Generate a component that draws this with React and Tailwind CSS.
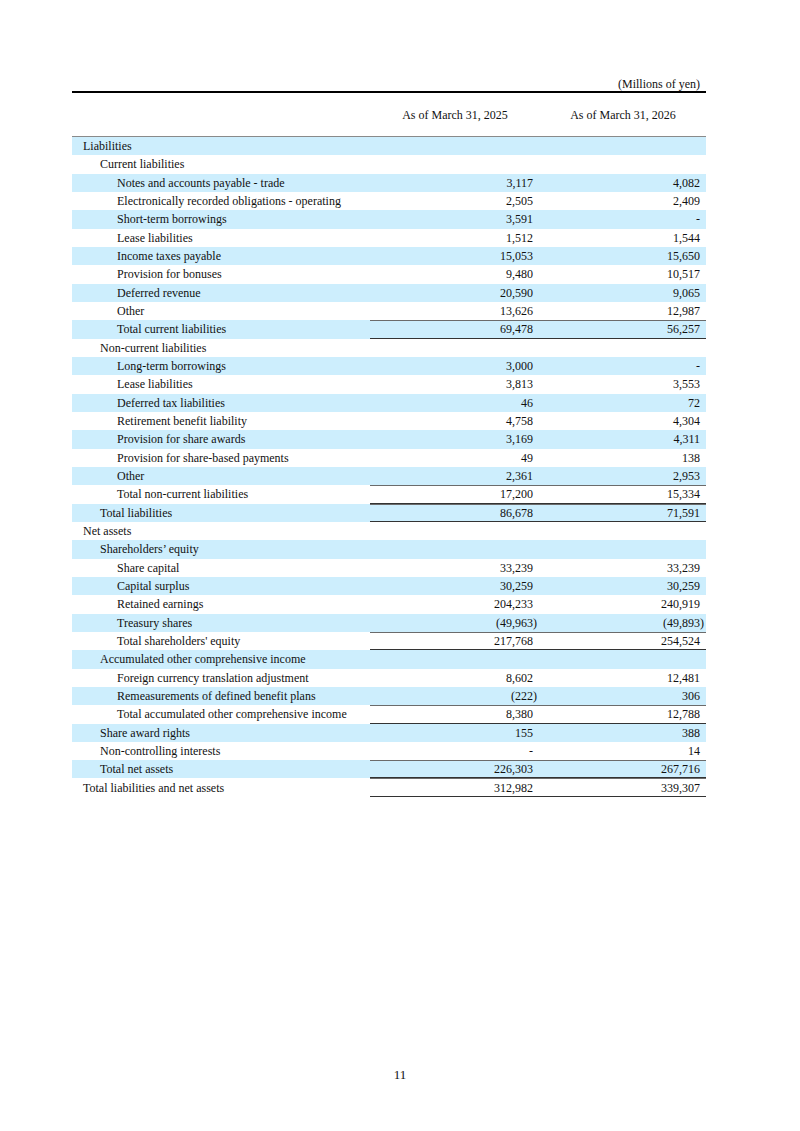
import React from 'react';

const ROWS = [
  { label: 'Liabilities', lvl: 0 },
  { label: 'Current liabilities', lvl: 1 },
  { label: 'Notes and accounts payable - trade', lvl: 2, a: '3,117', b: '4,082' },
  { label: 'Electronically recorded obligations - operating', lvl: 2, a: '2,505', b: '2,409' },
  { label: 'Short-term borrowings', lvl: 2, a: '3,591', b: '-' },
  { label: 'Lease liabilities', lvl: 2, a: '1,512', b: '1,544' },
  { label: 'Income taxes payable', lvl: 2, a: '15,053', b: '15,650' },
  { label: 'Provision for bonuses', lvl: 2, a: '9,480', b: '10,517' },
  { label: 'Deferred revenue', lvl: 2, a: '20,590', b: '9,065' },
  { label: 'Other', lvl: 2, a: '13,626', b: '12,987' },
  { label: 'Total current liabilities', lvl: 2, a: '69,478', b: '56,257', total: true },
  { label: 'Non-current liabilities', lvl: 1 },
  { label: 'Long-term borrowings', lvl: 2, a: '3,000', b: '-' },
  { label: 'Lease liabilities', lvl: 2, a: '3,813', b: '3,553' },
  { label: 'Deferred tax liabilities', lvl: 2, a: '46', b: '72' },
  { label: 'Retirement benefit liability', lvl: 2, a: '4,758', b: '4,304' },
  { label: 'Provision for share awards', lvl: 2, a: '3,169', b: '4,311' },
  { label: 'Provision for share-based payments', lvl: 2, a: '49', b: '138' },
  { label: 'Other', lvl: 2, a: '2,361', b: '2,953' },
  { label: 'Total non-current liabilities', lvl: 2, a: '17,200', b: '15,334', total: true },
  { label: 'Total liabilities', lvl: 1, a: '86,678', b: '71,591', total: true },
  { label: 'Net assets', lvl: 0 },
  { label: 'Shareholders\u2019 equity', lvl: 1 },
  { label: 'Share capital', lvl: 2, a: '33,239', b: '33,239' },
  { label: 'Capital surplus', lvl: 2, a: '30,259', b: '30,259' },
  { label: 'Retained earnings', lvl: 2, a: '204,233', b: '240,919' },
  { label: 'Treasury shares', lvl: 2, a: '(49,963)', b: '(49,893)' },
  { label: "Total shareholders' equity", lvl: 2, a: '217,768', b: '254,524', total: true },
  { label: 'Accumulated other comprehensive income', lvl: 1 },
  { label: 'Foreign currency translation adjustment', lvl: 2, a: '8,602', b: '12,481' },
  { label: 'Remeasurements of defined benefit plans', lvl: 2, a: '(222)', b: '306' },
  { label: 'Total accumulated other comprehensive income', lvl: 2, a: '8,380', b: '12,788', total: true },
  { label: 'Share award rights', lvl: 1, a: '155', b: '388' },
  { label: 'Non-controlling interests', lvl: 1, a: '-', b: '14' },
  { label: 'Total net assets', lvl: 1, a: '226,303', b: '267,716', total: true },
  { label: 'Total liabilities and net assets', lvl: 0, a: '312,982', b: '339,307', total: true },
];

const INDENT = ['pl-[11px]', 'pl-[28px]', 'pl-[45px]'];

const Num = ({ v }) => {
  if (!v) return null;
  if (v.startsWith('(')) return <span className="-mr-[4px]">{v}</span>;
  return <span>{v}</span>;
};

const Row = ({ row, shaded }) => {
  const line = row.total ? 'border-t border-b border-t-[#6b6b6b] border-b-[#333]' : '';
  return (
    <div className={`flex h-[18.33px] items-center ${shaded ? 'bg-[#cdeefd]' : ''}`}>
      <div className={`w-[298px] ${INDENT[row.lvl]} whitespace-nowrap`}>{row.label}</div>
      <div className={`w-[170px] h-full flex items-center justify-end pr-[7px] ${line}`}>
        <Num v={row.a} />
      </div>
      <div className={`w-[166px] h-full flex items-center justify-end pr-[6px] ${line}`}>
        <Num v={row.b} />
      </div>
    </div>
  );
};

export default function App() {
  return (
    <div className="w-[800px] h-[1131px] bg-white text-[#111] text-[12px] leading-[14px] font-['Liberation_Serif','Times_New_Roman',serif]">
      <div className="ml-[72px] w-[634px] pt-[77px]">
        <div className="text-right pr-[6px] h-[14px]">(Millions of yen)</div>
        <div className="h-[2px] bg-black" />
        <div className="flex h-[43px] items-center">
          <div className="w-[298px]" />
          <div className="w-[170px] text-center">As of March 31, 2025</div>
          <div className="w-[166px] text-center">As of March 31, 2026</div>
        </div>
        <div className="h-px bg-[#8a8a8a]" />
        {ROWS.map((r, i) => (
          <Row key={i} row={r} shaded={i % 2 === 0} />
        ))}
      </div>
      <div className="mt-[271px] text-center text-[13px]">11</div>
    </div>
  );
}
